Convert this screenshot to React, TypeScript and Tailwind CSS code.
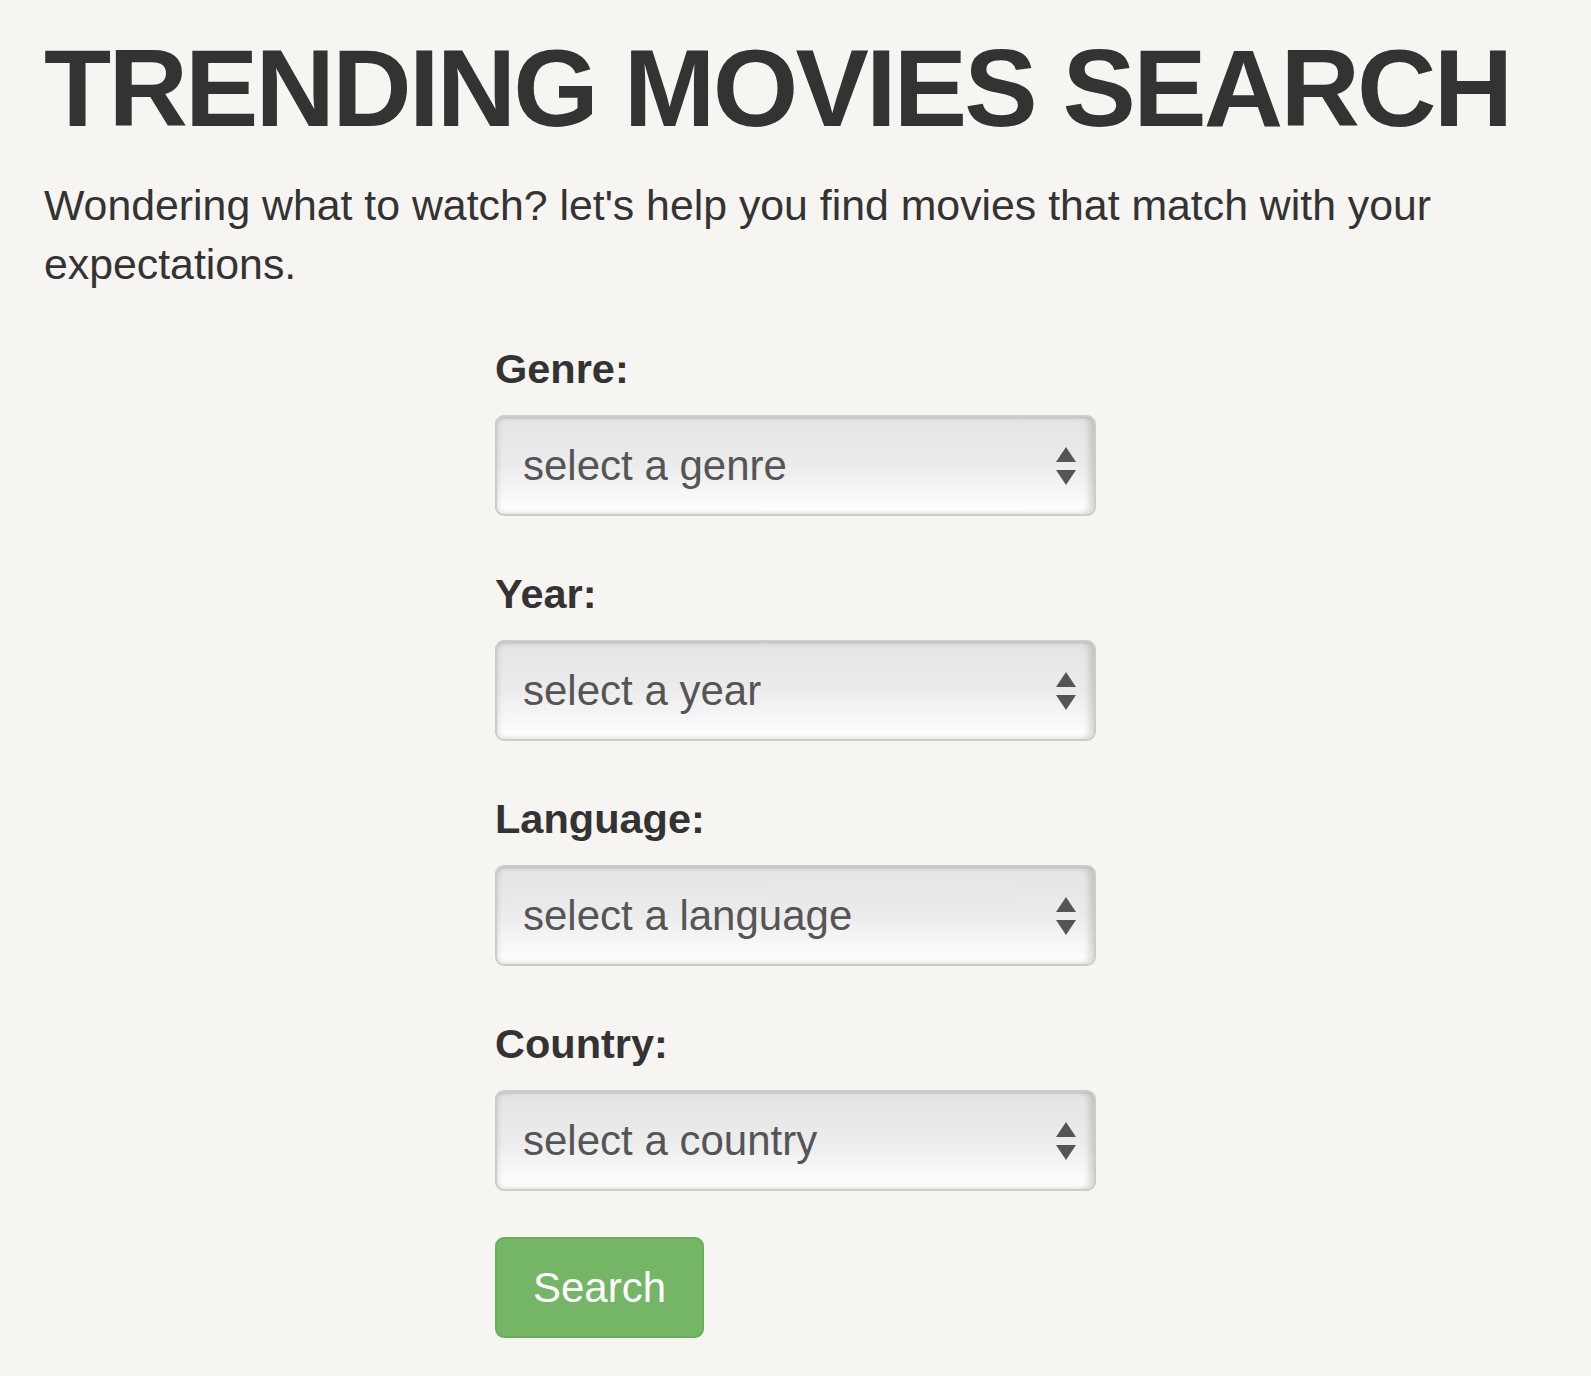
import React from 'react';

const fields = [
  { label: 'Genre', placeholder: 'select a genre' },
  { label: 'Year', placeholder: 'select a year' },
  { label: 'Language', placeholder: 'select a language' },
  { label: 'Country', placeholder: 'select a country' },
];

const SortArrows = () => (
  <svg width="20" height="38" viewBox="0 0 20 38" className="pointer-events-none absolute right-[20px] top-1/2 -translate-y-1/2">
    <polygon points="10,0 20,15 0,15" fill="#555" />
    <polygon points="0,23 20,23 10,38" fill="#555" />
  </svg>
);

const SelectField = ({ label, placeholder }: { label: string; placeholder: string }) => (
  <div className="flex flex-col">
    <label className="text-[41.5px] font-bold leading-[49px] text-[#333]">{label}:</label>
    <div className="relative mt-[22px] h-[101px] w-[601px]">
      <select
        defaultValue=""
        className="h-full w-full appearance-none rounded-[9px] border-2 border-[#cccccc] bg-gradient-to-b from-[#e4e4e4] via-[#ececec] to-[#ffffff] pl-[26px] text-[42px] text-[#555] shadow-[inset_3px_0_4px_rgba(0,0,0,0.06),inset_-5px_0_6px_rgba(0,0,0,0.14),inset_0_1px_2px_rgba(0,0,0,0.08)] outline-none"
      >
        <option value="">{placeholder}</option>
      </select>
      <SortArrows />
    </div>
  </div>
);

export default function App() {
  return (
    <div
      className="min-h-screen bg-[#f6f5f1] px-[44px] pt-[33px] pb-[40px] text-[#333]"
      style={{ fontFamily: '"Liberation Sans", Arial, sans-serif' }}
    >
      <h1 className="text-[110px] font-bold leading-none tracking-[-2.8px]">TRENDING MOVIES SEARCH</h1>
      <p className="mt-[33px] text-[42.8px] leading-[59px]">
        Wondering what to watch? let's help you find movies that match with your expectations.
      </p>

      <form className="mx-auto mt-[50px] flex w-[601px] flex-col gap-[53px]" onSubmit={(e) => e.preventDefault()}>
        {fields.map((f) => (
          <SelectField key={f.label} label={f.label} placeholder={f.placeholder} />
        ))}
        <div className="-mt-[7px]">
          <button
            type="submit"
            className="flex h-[101px] w-[209px] items-center justify-center rounded-[9px] border-2 border-[#6aad5b] bg-[#74b566] text-[42px] text-white"
          >
            Search
          </button>
        </div>
      </form>
    </div>
  );
}
